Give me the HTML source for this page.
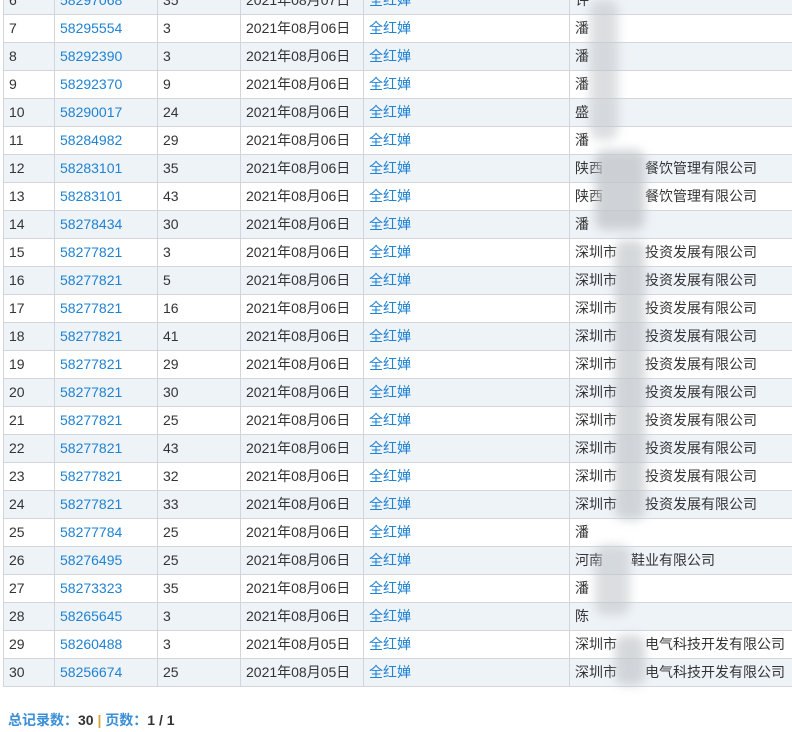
<!DOCTYPE html>
<html><head><meta charset="utf-8"><style>
body{margin:0;width:792px;height:732px;overflow:hidden;background:#fff;position:relative;font-family:"Liberation Sans","Noto Sans CJK SC",sans-serif;font-size:14px;color:#333}
table{position:absolute;left:3px;top:-14px;border-collapse:collapse;table-layout:fixed;width:820px}
td{border:1px solid #d2d6dc;height:27px;padding:0 0 0 5px;white-space:nowrap;overflow:hidden;line-height:27px}
tr:nth-child(odd) td{background:#eef3f8}
.b{color:#1f82d2}
.f{position:absolute;left:8px;top:710px;font-weight:bold;color:#3a8fd6;font-size:14px}
.f b{color:#333}
.bl{position:absolute;background:#c4c8cc;filter:blur(5px);border-radius:10px}
i{display:inline-block}
</style></head><body>
<table>
<colgroup><col style="width:51px"><col style="width:103px"><col style="width:83px"><col style="width:123px"><col style="width:206px"><col style="width:254px"></colgroup>
<tr><td>6</td><td class="b">58297068</td><td>35</td><td>2021年08月07日</td><td class="b">全红婵</td><td>许</td></tr>
<tr><td>7</td><td class="b">58295554</td><td>3</td><td>2021年08月06日</td><td class="b">全红婵</td><td>潘</td></tr>
<tr><td>8</td><td class="b">58292390</td><td>3</td><td>2021年08月06日</td><td class="b">全红婵</td><td>潘</td></tr>
<tr><td>9</td><td class="b">58292370</td><td>9</td><td>2021年08月06日</td><td class="b">全红婵</td><td>潘</td></tr>
<tr><td>10</td><td class="b">58290017</td><td>24</td><td>2021年08月06日</td><td class="b">全红婵</td><td>盛</td></tr>
<tr><td>11</td><td class="b">58284982</td><td>29</td><td>2021年08月06日</td><td class="b">全红婵</td><td>潘</td></tr>
<tr><td>12</td><td class="b">58283101</td><td>35</td><td>2021年08月06日</td><td class="b">全红婵</td><td>陕西<i style="width:42px"></i>餐饮管理有限公司</td></tr>
<tr><td>13</td><td class="b">58283101</td><td>43</td><td>2021年08月06日</td><td class="b">全红婵</td><td>陕西<i style="width:42px"></i>餐饮管理有限公司</td></tr>
<tr><td>14</td><td class="b">58278434</td><td>30</td><td>2021年08月06日</td><td class="b">全红婵</td><td>潘</td></tr>
<tr><td>15</td><td class="b">58277821</td><td>3</td><td>2021年08月06日</td><td class="b">全红婵</td><td>深圳市<i style="width:28px"></i>投资发展有限公司</td></tr>
<tr><td>16</td><td class="b">58277821</td><td>5</td><td>2021年08月06日</td><td class="b">全红婵</td><td>深圳市<i style="width:28px"></i>投资发展有限公司</td></tr>
<tr><td>17</td><td class="b">58277821</td><td>16</td><td>2021年08月06日</td><td class="b">全红婵</td><td>深圳市<i style="width:28px"></i>投资发展有限公司</td></tr>
<tr><td>18</td><td class="b">58277821</td><td>41</td><td>2021年08月06日</td><td class="b">全红婵</td><td>深圳市<i style="width:28px"></i>投资发展有限公司</td></tr>
<tr><td>19</td><td class="b">58277821</td><td>29</td><td>2021年08月06日</td><td class="b">全红婵</td><td>深圳市<i style="width:28px"></i>投资发展有限公司</td></tr>
<tr><td>20</td><td class="b">58277821</td><td>30</td><td>2021年08月06日</td><td class="b">全红婵</td><td>深圳市<i style="width:28px"></i>投资发展有限公司</td></tr>
<tr><td>21</td><td class="b">58277821</td><td>25</td><td>2021年08月06日</td><td class="b">全红婵</td><td>深圳市<i style="width:28px"></i>投资发展有限公司</td></tr>
<tr><td>22</td><td class="b">58277821</td><td>43</td><td>2021年08月06日</td><td class="b">全红婵</td><td>深圳市<i style="width:28px"></i>投资发展有限公司</td></tr>
<tr><td>23</td><td class="b">58277821</td><td>32</td><td>2021年08月06日</td><td class="b">全红婵</td><td>深圳市<i style="width:28px"></i>投资发展有限公司</td></tr>
<tr><td>24</td><td class="b">58277821</td><td>33</td><td>2021年08月06日</td><td class="b">全红婵</td><td>深圳市<i style="width:28px"></i>投资发展有限公司</td></tr>
<tr><td>25</td><td class="b">58277784</td><td>25</td><td>2021年08月06日</td><td class="b">全红婵</td><td>潘</td></tr>
<tr><td>26</td><td class="b">58276495</td><td>25</td><td>2021年08月06日</td><td class="b">全红婵</td><td>河南<i style="width:28px"></i>鞋业有限公司</td></tr>
<tr><td>27</td><td class="b">58273323</td><td>35</td><td>2021年08月06日</td><td class="b">全红婵</td><td>潘</td></tr>
<tr><td>28</td><td class="b">58265645</td><td>3</td><td>2021年08月06日</td><td class="b">全红婵</td><td>陈</td></tr>
<tr><td>29</td><td class="b">58260488</td><td>3</td><td>2021年08月05日</td><td class="b">全红婵</td><td>深圳市<i style="width:28px"></i>电气科技开发有限公司</td></tr>
<tr><td>30</td><td class="b">58256674</td><td>25</td><td>2021年08月05日</td><td class="b">全红婵</td><td>深圳市<i style="width:28px"></i>电气科技开发有限公司</td></tr>
</table>
<div class="bl" style="left:590px;top:0;width:28px;height:140px;opacity:.6"></div>
<div class="bl" style="left:595px;top:150px;width:50px;height:80px;opacity:.8"></div>
<div class="bl" style="left:615px;top:240px;width:30px;height:280px;opacity:.7"></div>
<div class="bl" style="left:595px;top:545px;width:35px;height:70px;opacity:.6"></div>
<div class="bl" style="left:615px;top:635px;width:30px;height:50px;opacity:.7"></div>
<div class="f">总记录数：<b>30</b> <span style="color:#d9a43a">|</span> 页数：<b>1 / 1</b></div>
</body></html>
